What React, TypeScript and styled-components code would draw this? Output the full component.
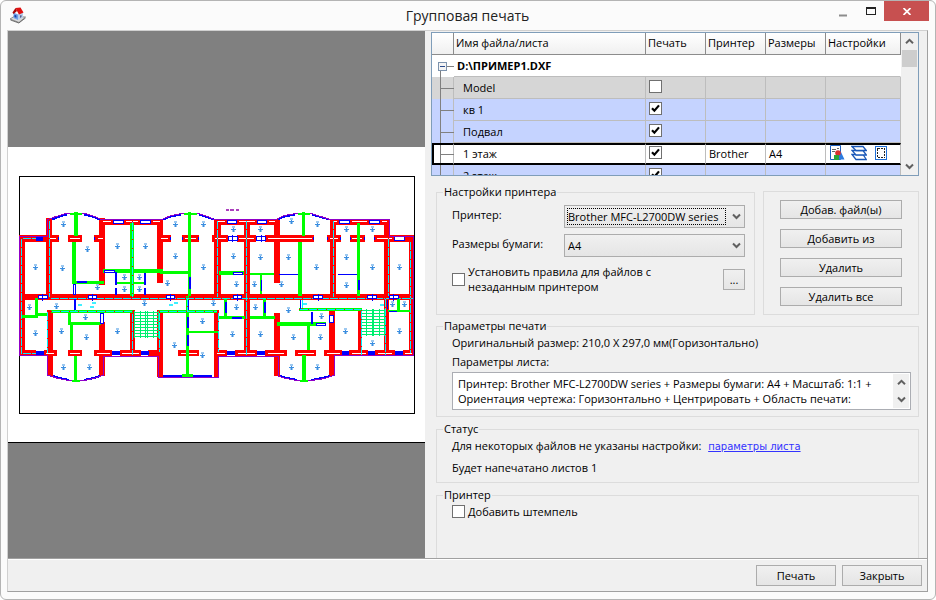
import React from "react";
import styled, { createGlobalStyle } from "styled-components";

const GlobalStyle = createGlobalStyle`
  * { box-sizing: border-box; }
  body { margin: 0; background: #fff; }
  body, button, select, input, textarea {
    font-family: "Open Sans", "Noto Sans", sans-serif;
    font-size: 11px;
    line-height: 15px;
    color: #000;
  }
`;

/* ---------- window frame ---------- */

const Window = styled.main`
  display: flex;
  flex-direction: column;
  min-height: 100vh;
  padding: 0 7px 7px 6px;
  background: #fbfbfb;
  border: 1px solid #b4b4b4;
  border-radius: 6px;
`;

const TitleBar = styled.header`
  display: grid;
  grid-template-columns: 1fr auto 1fr;
  height: 29px;
`;

const AppIcon = styled.svg`
  width: 18px;
  height: 18px;
  margin: 5px 0 0 2px;
`;

const Title = styled.h1`
  margin: 0;
  font-size: 14px;
  font-weight: 400;
  line-height: 29px;
  color: #222;
`;

const Caption = styled.div`
  display: flex;
  justify-content: flex-end;
  margin-right: -1px;
`;

const CaptionButton = styled.button<{ $close?: boolean }>`
  display: grid;
  place-items: center;
  width: ${(p) => (p.$close ? 45 : 27)}px;
  height: 20px;
  padding: 0;
  border: 0;
  background: ${(p) => (p.$close ? "#c75050" : "transparent")};
`;

const Client = styled.div`
  flex: 1;
  display: flex;
  flex-direction: column;
  background: #f0f0f0;
  border: 1px solid #d0d0d0;
  border-right-color: #a0a0a0;
  border-bottom-color: #a0a0a0;
`;

const Body = styled.div`
  flex: 1;
  display: grid;
  grid-template-columns: minmax(0, 417fr) minmax(0, 502fr);
`;

const Preview = styled.section`
  display: flex;
  flex-direction: column;
  justify-content: center;
  background: #808080;
`;

const Sheet = styled.svg`
  display: block;
  width: 100%;
  background: #fff;
  border-bottom: 1px solid #000;
`;

const Side = styled.section`
  display: flex;
  flex-direction: column;
  padding: 1px 8px 0 6px;
`;

/* ---------- sheet list ---------- */

const ListFrame = styled.div`
  display: grid;
  grid-template-columns: 1fr 17px;
  height: 144px;
  margin-bottom: 8px;
  overflow: hidden;
  border: 1px solid #7f9db9;
  background: #fff;
`;

const ListView = styled.div`
  overflow: hidden;
`;

const Table = styled.table`
  width: 100%;
  table-layout: fixed;
  border-collapse: separate;
  border-spacing: 0;
`;

const Col = styled.col<{ $w?: number }>`
  width: ${(p) => (p.$w ? `${p.$w}px` : "auto")};
`;

const Th = styled.th`
  height: 22px;
  padding: 0 2px 2px;
  text-align: left;
  font-weight: 400;
  white-space: nowrap;
  background: linear-gradient(#fff, #f0f0f0);
  border-right: 1px solid #8c8c8c;
  border-bottom: 1px solid #8c8c8c;
`;

type Tone = "plain" | "grey" | "blue" | "selected";
const tones: Record<Tone, string> = {
  plain: "#fff",
  grey: "#d6d6d6",
  blue: "#c5d3ff",
  selected: "#fff",
};

const Tr = styled.tr<{ $tone: Tone }>`
  background: ${(p) => tones[p.$tone]};
  td {
    height: 22px;
    padding: 0 3px;
    white-space: nowrap;
    border-right: 1px solid ${(p) => (p.$tone === "plain" ? "transparent" : "#bdbdbd")};
    border-bottom: 1px solid #bdbdbd;
    ${(p) => p.$tone === "selected" && "padding-bottom: 2px; border-top: 2px solid #000; border-bottom: 2px solid #000;"}
  }
  td:first-child {
    padding: 0;
    border-right: 1px solid #bdbdbd;
    ${(p) => p.$tone !== "selected" && "border-bottom: 0;"}
    ${(p) => p.$tone === "selected" && "border-left: 2px solid #000;"}
    ${(p) => p.$tone === "plain" && "border-right: 0;"}
  }
  td:nth-child(2) {
    padding-left: ${(p) => (p.$tone === "plain" ? 3 : 9)}px;
  }
`;

const FileName = styled.strong`
  font-weight: 700;
`;

const TreeArt = styled.svg<{ $inset?: boolean }>`
  display: block;
  width: 22px;
  height: ${(p) => (p.$inset ? 18 : 22)}px;
  margin-left: ${(p) => (p.$inset ? -2 : 0)}px;
`;

const Tools = styled.div`
  display: flex;
  gap: 6px;
`;

const ToolButton = styled.button`
  display: block;
  width: 16px;
  height: 16px;
  padding: 0;
  border: 0;
  background: none;
  svg { display: block; }
`;

const ScrollBar = styled.div`
  display: flex;
  flex-direction: column;
  padding: 0 1px;
  background: #f0f0f0;
`;

const ScrollButton = styled.button`
  display: grid;
  place-items: center;
  height: 17px;
  padding: 0;
  border: 0;
  background: none;
`;

const Track = styled.div`
  flex: 1;
`;

const Thumb = styled.div`
  height: 17px;
  background: #cdcdcd;
`;

/* ---------- form parts ---------- */

const CheckWrap = styled.span`
  display: grid;
  flex: none;
  width: 13px;
  height: 13px;
  > * { grid-area: 1 / 1; }
  svg { pointer-events: none; visibility: hidden; }
  input:checked + svg { visibility: visible; }
  td > & { margin-bottom: 2px; }
`;

const CheckBox = styled.input`
  appearance: none;
  width: 13px;
  height: 13px;
  margin: 0;
  background: #fff;
  border: 1px solid #707070;
`;

const TopRow = styled.div`
  display: grid;
  grid-template-columns: minmax(0, 319fr) minmax(0, 156fr);
  gap: 8px;
  margin: 0 0 3px 5px;
`;

const Group = styled.fieldset<{ $open?: boolean; $gap?: number; $top?: number; $end?: number }>`
  display: flex;
  flex-direction: column;
  gap: ${(p) => p.$gap ?? 5}px;
  min-width: 0;
  margin: 0 0 ${(p) => p.$end ?? 0}px 5px;
  padding: ${(p) => p.$top ?? 1}px 7px 6px 15px;
  border: 1px solid #dcdcdc;
  ${(p) => p.$open && "flex: 1; border-bottom: 0;"}
  ${TopRow} & { margin-left: 0; padding-right: 9px; }
`;

const Legend = styled.legend`
  margin-left: -9px;
  padding: 0 1px;
  line-height: 16px;
`;

const Line = styled.p`
  margin: 0;
  line-height: 16px;
`;

const Field = styled.label`
  display: grid;
  grid-template-columns: 112px minmax(0, 1fr);
  align-items: center;
`;

const FieldText = styled.span`
  padding-bottom: 4px;
`;

const SelectBox = styled.span`
  display: grid;
  grid-template-columns: minmax(0, 1fr) 17px;
  align-items: center;
  > svg { grid-area: 1 / 2; justify-self: center; pointer-events: none; }
`;

const Select = styled.select`
  grid-area: 1 / 1 / 2 / 3;
  appearance: none;
  width: 100%;
  height: 23px;
  padding: 0 20px 0 3px;
  border: 1px solid #acacac;
  border-radius: 0;
  background: linear-gradient(#f0f0f0, #e5e5e5);
`;

const FocusRing = styled.span`
  grid-area: 1 / 1;
  z-index: 1;
  height: 17px;
  margin: 0 2px 0 3px;
  border: 1px dotted #000;
  pointer-events: none;
`;

const RuleRow = styled.div`
  display: flex;
  align-items: center;
  justify-content: space-between;
  padding: 1px 0 14px;
`;

const CheckLabel = styled.label`
  display: flex;
  align-items: center;
  gap: 3px;
`;

const RuleText = styled.span`
  max-width: 200px;
`;

const Button = styled.button<{ $size?: "dialog" | "dots" }>`
  height: ${(p) => (p.$size ? 21 : 19)}px;
  width: ${(p) => (p.$size === "dialog" ? "80px" : p.$size === "dots" ? "22px" : "auto")};
  padding: 0;
  line-height: 17px;
  border: 1px solid #acacac;
  background: linear-gradient(#f0f0f0, #e5e5e5);
`;

const ButtonGroup = styled.div`
  display: flex;
  flex-direction: column;
  gap: 10px;
  margin-top: 7px;
  padding: 8px 16px;
  border: 1px solid #dcdcdc;
`;

const MemoFrame = styled.div`
  display: grid;
  grid-template-columns: minmax(0, 1fr) 16px;
  height: 38px;
  margin-top: -1px;
  padding: 1px;
  border: 1px solid #abadb3;
  background: #fff;
`;

const Memo = styled.textarea`
  height: 34px;
  padding: 2px 0 0 4px;
  border: 0;
  resize: none;
  overflow: hidden;
  white-space: pre;
  background: transparent;
`;

const MemoScroll = styled(ScrollBar)`
  padding: 0;
`;

const Link = styled.a`
  margin-left: 4px;
  font-family: "DejaVu Sans", sans-serif;
  font-size: 10px;
  color: #3333ff;
`;

const Footer = styled.footer`
  display: flex;
  justify-content: flex-end;
  gap: 6px;
  height: 33px;
  padding: 6px 5px 0;
  border-top: 1px solid #a0a0a0;
  box-shadow: inset 0 1px #fff;
`;

/* ---------- small drawings ---------- */

const Chevron = ({ up }: { up?: boolean }) => (
  <svg width="9" height="7" viewBox="0 0 9 7">
    <path d={up ? "M1 5.2 4.5 1.8 8 5.2" : "M1 1.5 4.5 5 8 1.5"} fill="none" stroke="#606060" strokeWidth="2" />
  </svg>
);

const Check = ({ id, label, on }: { id?: string; label?: string; on?: boolean }) => (
  <CheckWrap>
    <CheckBox type="checkbox" id={id} aria-label={label} defaultChecked={on} />
    <svg width="13" height="13" viewBox="0 0 13 13">
      <path d="M3 6.2 5.4 8.7 10 3.4" fill="none" stroke="#000" strokeWidth="2.2" />
    </svg>
  </CheckWrap>
);

const Branch = ({ inset }: { inset?: boolean }) => (
  <TreeArt $inset={inset} viewBox={inset ? "0 2 22 18" : "0 0 22 22"} shapeRendering="crispEdges">
    <path d="M8.5 0V22M9 11.5H22" stroke="#808080" fill="none" />
  </TreeArt>
);

const Root = () => (
  <TreeArt viewBox="0 0 22 22" shapeRendering="crispEdges">
    <path d="M8.5 15V22M15 11.5H22" stroke="#808080" fill="none" />
    <rect x="6.5" y="7.5" width="8" height="8" rx="1" fill="#f4f4f4" stroke="#7d93ad" />
    <path d="M8 11.5H13" stroke="#2b4c8c" />
  </TreeArt>
);

const HouseIcon = () => (
  <AppIcon viewBox="0 0 18 18" aria-hidden="true">
    <path d="M1 13 5 10.5 16.500 11 10 16.500z" fill="#d9d9d9" stroke="#777" strokeWidth=".8" />
    <path d="M1.500 14 9.800 17 16.500 12" fill="none" stroke="#555" strokeWidth=".8" />
    <path d="M4.500 6.500 9 8.500V14L4.500 12z" fill="#6ea0e8" />
    <path d="M9 8 14 6V11.500L9 14z" fill="#b9cdea" />
    <path d="M6.500 2 11.500 1.500 14.500 6.500 10 8.500 8 5z" fill="#e01010" />
    <path d="M6.500 2 8 5 4.500 8 3.500 6.500z" fill="#a80808" />
    <path d="M5.500 8.800 7.400 9.500V11.700L5.500 11z" fill="#1442a8" />
    <path d="M11 9.500 12.500 8.900V11L11 11.900z" fill="#555f8a" />
  </AppIcon>
);

const PageIcon = () => (
  <svg width="16" height="16" viewBox="0 0 16 16">
    <path d="M1.500 .5H11.500V14.500H1.500z" fill="#fff" stroke="#1c5fc0" />
    <path d="M3 4.500H7M3 6.500H6M8 3.500H10" stroke="#666" />
    <path d="M11.500 6 15.500 14.500H8z" fill="#2c7be0" />
    <circle cx="9" cy="8" r="2.800" fill="#d83030" />
    <path d="M5 10H10V15H5z" fill="#2aa53a" />
  </svg>
);

const LayersIcon = () => (
  <svg width="16" height="16" viewBox="0 0 16 16" fill="#fff" stroke="#1b58b8" strokeWidth="1.300">
    <path d="M1 9.500H12L15.300 14.500H5z" />
    <path d="M1 5.500H12L15.300 10H5z" />
    <path d="M1 1.500H12L15.300 5.500H5z" />
  </svg>
);

const AreaIcon = () => (
  <svg width="16" height="16" viewBox="0 0 16 16" shapeRendering="crispEdges">
    <rect x="2.500" y="1.500" width="11" height="13" fill="#fff" stroke="#1f6fd8" />
    <rect x="4.500" y="3.500" width="7" height="9" fill="none" stroke="#222" strokeDasharray="2 1" />
  </svg>
);

/* ---------- floor plan ---------- */

/* Boxes are [left, top, right, bottom] in sheet coordinates. */
type Box = [number, number, number, number];

const redWalls: Box[] = [
  [19, 235, 25, 356], [19, 235, 59, 242], [68, 235, 82, 242], [94, 235, 104, 242],
  [46, 218, 52, 298], [99, 218, 105, 285], [99, 219, 163, 225], [20, 294, 414, 300],
  [47, 310, 53, 376], [99, 322, 105, 376], [130, 310, 135, 356],
  [157, 219, 163, 283], [160, 235, 171, 242], [182, 235, 199, 242], [212, 235, 228, 242],
  [237, 235, 256, 242], [265, 235, 314, 242], [214, 219, 221, 298], [214, 219, 277, 225],
  [244, 219, 250, 356], [274, 219, 280, 283], [157, 310, 163, 377], [214, 310, 219, 378],
  [274, 313, 280, 376], [330, 219, 336, 298], [330, 219, 390, 225], [384, 219, 390, 298],
  [327, 235, 341, 242], [350, 235, 365, 242], [374, 235, 414, 242], [409, 235, 414, 356],
  [358, 308, 362, 356], [384, 298, 389, 356], [329, 310, 335, 376],
];

const lowerPiers: [number, number][] = [
  [19, 36], [44, 57], [68, 82], [94, 112], [120, 141], [148, 161], [178, 199], [214, 227],
  [235, 257], [265, 287], [295, 316], [324, 342], [349, 368], [375, 395], [403, 414],
];

const greenWalls: Box[] = [
  [74, 212, 78, 236], [72, 242, 76, 284], [72, 281, 104, 284], [130, 223, 134, 296],
  [103, 269, 163, 273], [116, 282, 145, 284], [35, 298, 38, 315], [22, 315, 38, 318],
  [35, 313, 47, 316], [51, 310, 133, 313], [68, 312, 71, 324], [68, 322, 101, 325],
  [70, 324, 73, 350], [74, 356, 77, 380], [188, 212, 191, 296], [160, 271, 190, 274],
  [186, 296, 189, 376], [187, 331, 218, 333], [159, 310, 217, 313], [219, 271, 244, 275],
  [250, 273, 274, 275], [260, 275, 262, 294], [219, 316, 245, 319], [250, 316, 275, 319],
  [224, 298, 227, 317], [263, 298, 266, 317], [277, 322, 326, 326], [302, 212, 305, 236],
  [298, 242, 302, 296], [357, 223, 360, 296], [302, 355, 306, 381], [307, 325, 310, 350],
  [299, 308, 362, 311], [397, 298, 400, 312], [388, 310, 411, 312], [182, 374, 193, 377],
];

/* Windows and door frames: blue outline, white inside. */
const frames: Box[] = [
  [113, 220, 124, 224], [140, 220, 151, 224], [227, 220, 237, 224], [257, 220, 267, 224],
  [339, 220, 350, 224], [369, 220, 380, 224], [394, 236, 405, 241],
  [38, 295, 48, 299], [88, 295, 97, 299], [166, 295, 175, 299], [233, 295, 242, 299],
  [313, 295, 323, 299], [367, 295, 377, 299], [389, 295, 399, 299], [104, 270, 115, 273],
  [73, 284, 76, 295], [100, 313, 104, 324], [228, 236, 238, 241], [256, 236, 266, 241],
  [329, 315, 334, 323], [316, 323, 326, 326], [233, 272, 243, 275],
];

const blueBars: Box[] = [
  [36, 236, 43, 241], [77, 281, 87, 283], [115, 272, 117, 285], [115, 288, 117, 295],
  [144, 273, 146, 285], [144, 288, 146, 295], [74, 299, 76, 310], [189, 277, 191, 289],
  [225, 302, 227, 313], [264, 302, 266, 313], [187, 317, 189, 328], [187, 335, 189, 346],
  [232, 317, 242, 319], [311, 312, 313, 324], [358, 280, 360, 290], [261, 280, 262, 291],
  [279, 274, 298, 275], [338, 274, 357, 275], [36, 351, 44, 355], [112, 351, 120, 355],
  [141, 351, 149, 355], [227, 351, 235, 355], [257, 351, 265, 355], [342, 351, 349, 355],
  [368, 351, 375, 355], [395, 351, 403, 355], [163, 375, 182, 377], [193, 375, 212, 377],
  [58, 237, 59, 240], [94, 237, 95, 240], [170, 237, 171, 240], [182, 237, 183, 240],
  [198, 237, 199, 240], [313, 237, 314, 240], [327, 237, 328, 240], [340, 237, 341, 240],
  [350, 237, 351, 240], [364, 237, 365, 240], [374, 237, 375, 240], [300, 300, 301, 309],
  [387, 300, 388, 309], [389, 311, 397, 312], [188, 300, 189, 310],
];

const slots =
  "M70 238.500H80M50 238.500H56M98 238.500H103M161 238.500H168M185 238.500H196M215 238.500H226M239 238.500H254M268 238.500H312M330 238.500H338M352 238.500H362M377 238.500H392" +
  "M21 353.500H34M46 353.500H54M70 353.500H80M97 353.500H110M122 353.500H139M181 353.500H197M217 353.500H225M238 353.500H255M268 353.500H284M298 353.500H314M327 353.500H340M352 353.500H366M378 353.500H392M405 353.500H412" +
  "M103 221.500H111M126 221.500H138M153 221.500H160M218 221.500H225M239 221.500H255M269 221.500H275M333 221.500H337M352 221.500H367M382 221.500H387";

const service =
  "M21.500 238V354M22 238.500H36M22 353.500H36M49.500 220V297M47.500 311V353M50 298.500H414M132.500 221V297M132.500 313V355M217.500 220V297M246.500 220V355M333.500 220V297M388.500 238V296M385.500 298V355M361.500 310V355M410.500 241V353M51 311.500H133M159 311.500H217M299 309.500H361M75.500 297V311M187.500 297V311M302.500 299V309M218.500 312V352M159.500 312V352";

const fixtures = "M92 302.500H96M90 306.500H94M78 304.500H82M174 302.500H178M169 304.500H173M303 303.500H307M380 304.500H384";

const outline =
  "M19.500 356V236.500H47.500V219.500L56 216.500 66 213.500H85L95 216.500 101 219.500H162L171 215.500 182 213.500H198L208 216.500 214 219.500H276L284 215.500 296 213.500H311L321 216.500 330 219.500H389.500V236.500H413.500V355.500H334.500V375L325 378.500 311 380.500H297L286 378.500 278 376V356.500H218.500V377.500H158.500V356.500H103.500V375L94 378.500 84 380.500H69L58 378.500 47.500 375V355.500H19";

const bays =
  "M52 219.500 58 217 67 214.500M84 214.500 94 217 100 219.500M163 219.500 171 216.500 181 214.500M199 214.500 207 217 214 219.500M278 219 285 216.500 295 214.500M312 214.500 321 217 329 219.500M53 376 59 378 69 380M84 380 94 378 100 376M280 376 287 378 297 380M311 380 322 378 330 376";

const stair = (x: number, y: number, cols: number[], w: number) =>
  cols.map((c) => `M${x + c + 0.5} ${y}V${y + 27}`).join("") +
  Array.from({ length: 9 }, (_, i) => `M${x} ${y + i * 3 + 1.5}H${x + w}`).join("");

const stairs = stair(134, 311, [0, 6, 11, 13, 19, 24], 25) + stair(361, 309, [0, 5, 11, 12, 18, 23], 24);

const crosses: [number, number][] = [
  [42, 297], [92, 297], [170, 297], [237, 297], [318, 297], [372, 297], [393, 297],
  [232, 238], [261, 238],
];

const roomMarks: [number, number][] = [
  [63, 224], [87, 249], [117, 246], [145, 246], [35, 267], [62, 268], [97, 287], [124, 277],
  [139, 277], [124, 289], [139, 289], [29, 307], [56, 306], [144, 303], [35, 333], [61, 331],
  [85, 317], [86, 337], [117, 331], [63, 367], [89, 367], [175, 224], [203, 224], [233, 229],
  [260, 229], [175, 256], [233, 256], [260, 257], [203, 267], [167, 283], [236, 284], [254, 284],
  [281, 284], [213, 303], [236, 307], [255, 307], [202, 321], [232, 334], [260, 334], [174, 345],
  [202, 355], [291, 221], [317, 224], [346, 229], [372, 229], [288, 257], [346, 257], [316, 267],
  [372, 267], [399, 267], [346, 285], [288, 310], [392, 304], [404, 304], [321, 316], [345, 331],
  [399, 331], [293, 337], [320, 337], [372, 343], [291, 367], [317, 367],
];

const Boxes = ({ items, fill, stroke }: { items: Box[]; fill: string; stroke?: string }) => (
  <g fill={fill} stroke={stroke}>
    {items.map(([l, t, r, b], i) =>
      stroke ? (
        <rect key={i} x={l + 0.5} y={t + 0.5} width={r - l - 1} height={b - t - 1} />
      ) : (
        <rect key={i} x={l} y={t} width={r - l} height={b - t} />
      )
    )}
  </g>
);

const markPath = (draw: (x: number, y: number) => string) => roomMarks.map(([x, y]) => draw(x, y)).join("");

const FloorPlan = () => (
  <Sheet viewBox="8 147 417 295" role="img" aria-label="1 этаж" shapeRendering="crispEdges">
    <rect x="19.500" y="176.500" width="395" height="237" fill="none" stroke="#000" />
    <Boxes items={redWalls} fill="#f00" />
    <Boxes items={lowerPiers.map(([l, r]): Box => [l, 350, r, 356])} fill="#f00" />
    <path d={slots} stroke="#fff" />
    <Boxes items={greenWalls} fill="#0f0" />
    <path d={stairs} stroke="#00f070" fill="none" />
    <path d={service} stroke="#00f0ff" fill="none" />
    <path d={service} stroke="#f00" fill="none" strokeDasharray="1 8" />
    <path d={fixtures} stroke="#40f0ff" strokeWidth="2" />
    <Boxes items={blueBars} fill="#00f" />
    <Boxes items={frames} fill="#fff" stroke="#00f" />
    <path d={crosses.map(([x, y]) => `M${x + 0.5} ${y - 3}V${y + 4}`).join("")} stroke="#00f" />
    <path d={bays} stroke="#00f" strokeWidth="2" fill="none" />
    <path d={outline} stroke="#9000c8" fill="none" />
    <path d="M70 213.500H82M184 213.500H197M298 213.500H310M72 380.500H80M300 380.500H308" stroke="#0f0" strokeWidth="2" />
    <path d={markPath((x, y) => `M${x - 1} ${y - 2}H${x + 2}M${x - 1} ${y + 2}H${x + 2}`)} stroke="#9cc8f0" strokeWidth="2" />
    <path d={markPath((x, y) => `M${x - 2} ${y + 0.5}H${x + 3}M${x + 0.5} ${y - 1}V${y + 3}`)} stroke="#3c8ee0" />
    <path d="M226 209.500H229M230 209.500H234M236 209.500H239" stroke="#9000a8" strokeWidth="2" opacity=".75" />
  </Sheet>
);

/* ---------- page ---------- */

type SheetRow = { name: string; tone: Tone; on: boolean; printer?: string; size?: string };

const sheets: SheetRow[] = [
  { name: "Model", tone: "grey", on: false },
  { name: "кв 1", tone: "blue", on: true },
  { name: "Подвал", tone: "blue", on: true },
  { name: "1 этаж", tone: "selected", on: true, printer: "Brother", size: "A4" },
  { name: "2 этаж", tone: "blue", on: true },
];

const memoText =
  "Принтер: Brother MFC-L2700DW series + Размеры бумаги: A4 + Масштаб: 1:1 +\n" +
  "Ориентация чертежа: Горизонтально + Центрировать + Область печати:";

export default function App() {
  return (
    <>
      <GlobalStyle />
      <Window>
        <TitleBar>
          <HouseIcon />
          <Title>Групповая печать</Title>
          <Caption>
            <CaptionButton aria-label="Свернуть">
              <svg width="9" height="11"><path d="M0 9.500H8" stroke="#8c8c8c" strokeWidth="2" /></svg>
            </CaptionButton>
            <CaptionButton aria-label="Развернуть">
              <svg width="10" height="8" shapeRendering="crispEdges">
                <path d="M.5 0V8M9.500 0V8M0 7.500H10" stroke="#222" />
                <path d="M0 1H10" stroke="#222" strokeWidth="2" />
              </svg>
            </CaptionButton>
            <CaptionButton $close aria-label="Закрыть окно">
              <svg width="8" height="7" viewBox="0 0 8 7"><path d="M.5 0 7.500 7M7.500 0 .5 7" stroke="#fff" strokeWidth="1.700" /></svg>
            </CaptionButton>
          </Caption>
        </TitleBar>
        <Client>
          <Body>
            <Preview><FloorPlan /></Preview>
            <Side>
              <ListFrame>
                <ListView>
                  <Table>
                    <colgroup>
                      <Col $w={22} /><Col /><Col $w={60} /><Col $w={60} /><Col $w={60} /><Col $w={75} />
                    </colgroup>
                    <thead>
                      <tr>
                        <Th /><Th>Имя файла/листа</Th><Th>Печать</Th><Th>Принтер</Th><Th>Размеры</Th><Th>Настройки</Th>
                      </tr>
                    </thead>
                    <tbody>
                      <Tr $tone="plain">
                        <td><Root /></td>
                        <td colSpan={5}><FileName>D:\ПРИМЕР1.DXF</FileName></td>
                      </Tr>
                      {sheets.map((s) => (
                        <Tr key={s.name} $tone={s.tone}>
                          <td><Branch inset={s.tone === "selected"} /></td>
                          <td>{s.name}</td>
                          <td><Check label={`Печать: ${s.name}`} on={s.on} /></td>
                          <td>{s.printer}</td>
                          <td>{s.size}</td>
                          <td>
                            {s.printer && (
                              <Tools>
                                <ToolButton aria-label="Параметры листа"><PageIcon /></ToolButton>
                                <ToolButton aria-label="Слои"><LayersIcon /></ToolButton>
                                <ToolButton aria-label="Область печати"><AreaIcon /></ToolButton>
                              </Tools>
                            )}
                          </td>
                        </Tr>
                      ))}
                    </tbody>
                  </Table>
                </ListView>
                <ScrollBar>
                  <ScrollButton aria-label="Вверх"><Chevron up /></ScrollButton>
                  <Track><Thumb /></Track>
                  <ScrollButton aria-label="Вниз"><Chevron /></ScrollButton>
                </ScrollBar>
              </ListFrame>

              <TopRow>
                <Group $top={5} $gap={6}>
                  <Legend>Настройки принтера</Legend>
                  <Field>
                    <FieldText>Принтер:</FieldText>
                    <SelectBox>
                      <Select><option>Brother MFC-L2700DW series</option></Select>
                      <FocusRing />
                      <Chevron />
                    </SelectBox>
                  </Field>
                  <Field>
                    <FieldText>Размеры бумаги:</FieldText>
                    <SelectBox>
                      <Select><option>A4</option></Select>
                      <Chevron />
                    </SelectBox>
                  </Field>
                  <RuleRow>
                    <CheckLabel htmlFor="rules">
                      <Check id="rules" />
                      <RuleText>Установить правила для файлов с незаданным принтером</RuleText>
                    </CheckLabel>
                    <Button $size="dots">...</Button>
                  </RuleRow>
                </Group>
                <ButtonGroup>
                  <Button>Добав. файл(ы)</Button>
                  <Button>Добавить из</Button>
                  <Button>Удалить</Button>
                  <Button>Удалить все</Button>
                </ButtonGroup>
              </TopRow>

              <Group $gap={3} $end={4}>
                <Legend>Параметры печати</Legend>
                <Line>Оригинальный размер: 210,0 X 297,0 мм(Горизонтально)</Line>
                <Line as="label" htmlFor="memo">Параметры листа:</Line>
                <MemoFrame>
                  <Memo id="memo" readOnly value={memoText} />
                  <MemoScroll>
                    <ScrollButton aria-label="Прокрутить вверх"><Chevron up /></ScrollButton>
                    <ScrollButton aria-label="Прокрутить вниз"><Chevron /></ScrollButton>
                  </MemoScroll>
                </MemoFrame>
              </Group>

              <Group $end={4}>
                <Legend>Статус</Legend>
                <Line>
                  Для некоторых файлов не указаны настройки: <Link href="#sheet">параметры листа</Link>
                </Line>
                <Line>Будет напечатано листов 1</Line>
              </Group>

              <Group $open>
                <Legend>Принтер</Legend>
                <CheckLabel htmlFor="stamp">
                  <Check id="stamp" />
                  <span>Добавить штемпель</span>
                </CheckLabel>
              </Group>
            </Side>
          </Body>
          <Footer>
            <Button $size="dialog">Печать</Button>
            <Button $size="dialog">Закрыть</Button>
          </Footer>
        </Client>
      </Window>
    </>
  );
}
